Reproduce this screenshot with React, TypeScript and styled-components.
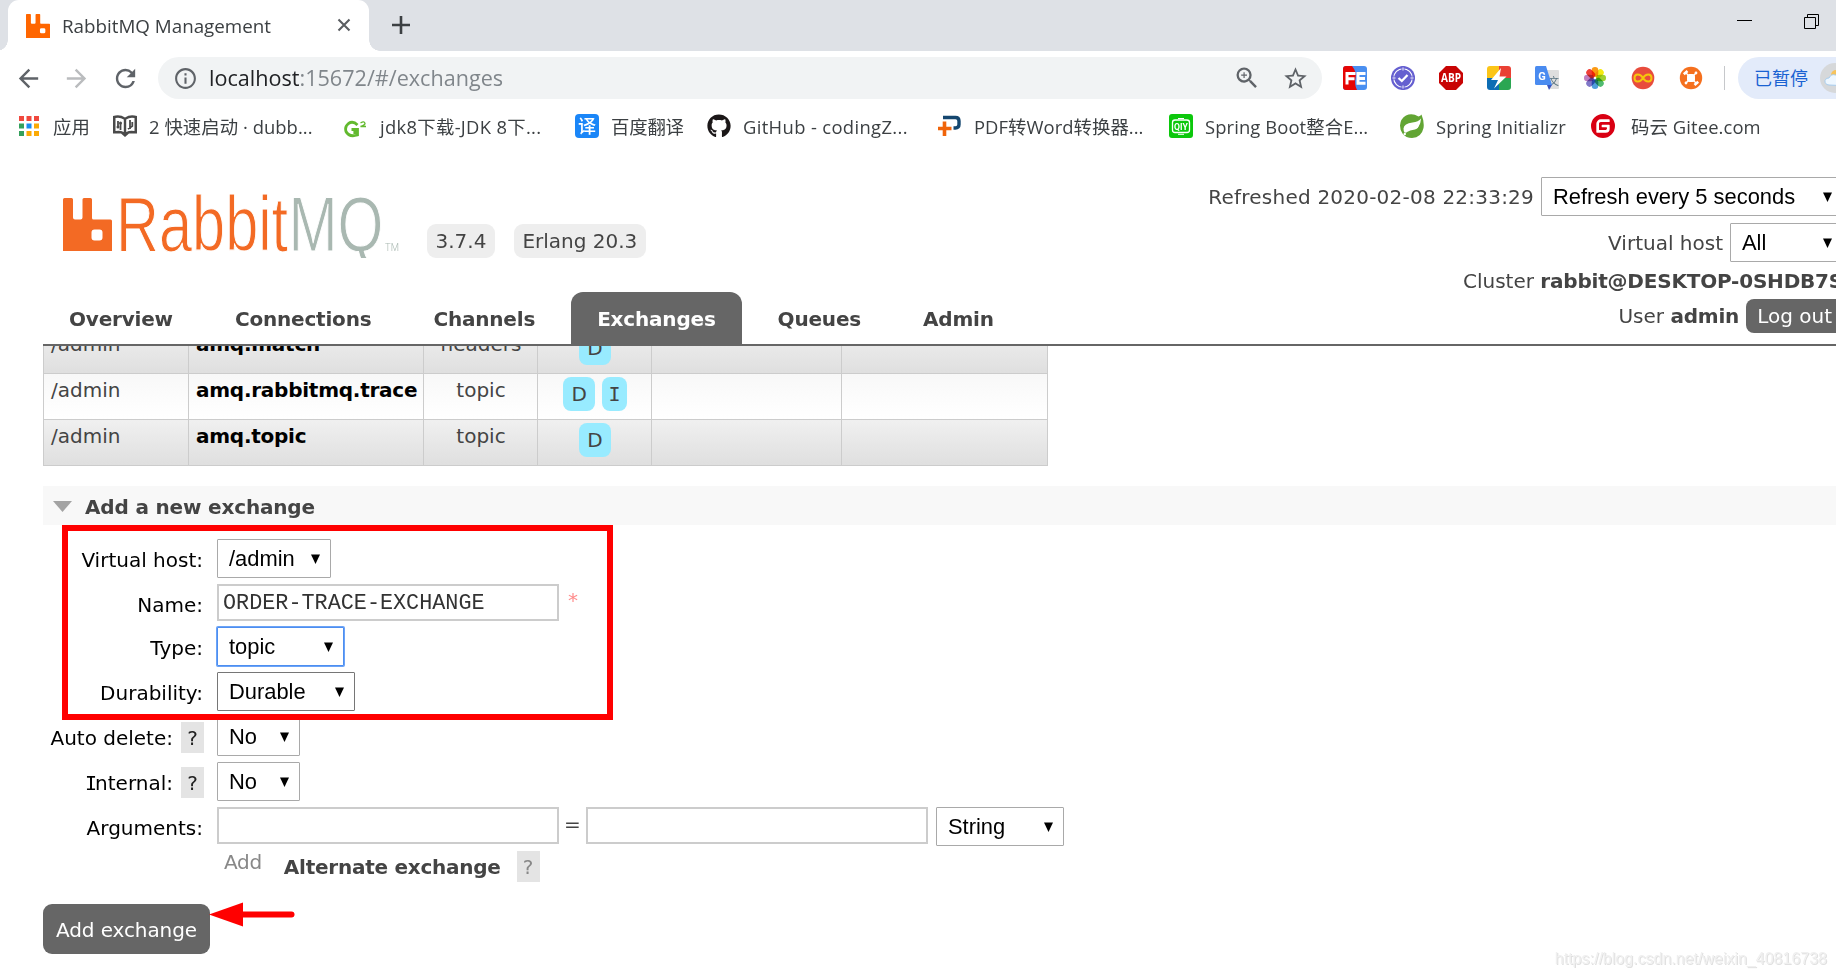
import React from "react";
import styled, { createGlobalStyle, css } from "styled-components";
import { MdArrowBack, MdArrowForward, MdRefresh, MdInfoOutline, MdZoomIn, MdStarBorder } from "react-icons/md";
import { FaGithub } from "react-icons/fa";
import { SiGitee } from "react-icons/si";

const GlobalStyle = createGlobalStyle`
  * { box-sizing: border-box; }
  body { margin: 0; background: #fff; overflow: hidden; }
`;

const uiFont = `"Open Sans", "Noto Sans CJK SC", sans-serif`;
const pageFont = `"DejaVu Sans", Verdana, sans-serif`;

const Window = styled.div`
  position: relative;
  width: 1836px;
  height: 977px;
  overflow: hidden;
  display: flex;
  flex-direction: column;
  background: #fff;
  font-family: ${pageFont};
  font-size: 20px;
  color: #444;
  white-space: nowrap;
`;

/* ---------- browser chrome ---------- */

const TabStrip = styled.div`
  flex: none;
  display: flex;
  height: 51px;
  padding-left: 8px;
  background: #dee1e6;
`;

const BrowserTab = styled.div`
  position: relative;
  display: flex;
  align-items: center;
  width: 361px;
  padding: 0 18px;
  border-radius: 11px 11px 0 0;
  background: #fff;
  font-family: ${uiFont};
  font-size: 18.8px;
  color: #3c4043;
  &::before, &::after {
    content: "";
    position: absolute;
    bottom: 0;
    width: 11px;
    height: 11px;
  }
  &::before { left: -11px; background: radial-gradient(circle at 0 0, #dee1e6 10.5px, #fff 11px); }
  &::after { right: -11px; background: radial-gradient(circle at 100% 0, #dee1e6 10.5px, #fff 11px); }
`;

const TabTitle = styled.span`
  flex: 1;
  margin-left: 12px;
  line-height: 48px;
`;

const CloseGlyph = styled.svg`
  margin: 0 0 1px;
  width: 14px;
  height: 14px;
`;

const NewTab = styled.svg`
  margin: 16px 0 0 22px;
  width: 20px;
  height: 20px;
`;

const WindowControls = styled.div`
  display: flex;
  gap: 52px;
  margin-left: auto;
  padding: 13px 16px 0 0;
`;

const Toolbar = styled.div`
  flex: none;
  display: flex;
  align-items: center;
  height: 54px;
  padding-left: 14px;
  color: #5f6368;
`;

const NavIcon = styled.span<{ $gap: number; $dim?: boolean }>`
  flex: none;
  display: flex;
  width: 29px;
  margin-right: ${p => p.$gap}px;
  font-size: 29px;
  color: ${p => (p.$dim ? "#babcbe" : "#5f6368")};
`;

const Omnibox = styled.div`
  flex: none;
  display: flex;
  align-items: center;
  width: 1164px;
  height: 42px;
  padding: 0 13px 0 15px;
  border-radius: 21px;
  background: #f1f3f4;
`;

const Url = styled.span`
  flex: 1;
  margin-left: 11px;
  font-family: ${uiFont};
  font-size: 21.6px;
  line-height: 42px;
  color: #80868b;
  b { font-weight: 400; color: #202124; }
`;

const StarIcon = styled(MdStarBorder)`
  margin-left: 21px;
`;

const Extensions = styled.div`
  flex: none;
  display: flex;
  gap: 24px;
  padding: 0 21px;
  svg { display: block; width: 24px; height: 24px; }
`;

const Divider = styled.span`
  flex: none;
  width: 1px;
  height: 24px;
  background: #c6c8cb;
`;

const ProfilePill = styled.div`
  flex: none;
  display: flex;
  align-items: center;
  width: 140px;
  height: 42px;
  margin-left: 13px;
  padding-left: 16px;
  border-radius: 21px;
  background: #e3ebfa;
  font-family: ${uiFont};
  font-size: 18px;
  line-height: 42px;
  color: #1a62d2;
  svg { margin-left: 12px; }
`;

const BookmarkBar = styled.div`
  flex: none;
  display: flex;
  align-items: center;
  height: 42px;
  padding-left: 19px;
`;

const Bookmark = styled.div<{ $width: number; $gap?: number; $spacing?: number }>`
  flex: none;
  display: flex;
  align-items: center;
  gap: ${p => p.$gap ?? 12}px;
  width: ${p => p.$width}px;
  font-family: ${uiFont};
  font-size: 18.4px;
  letter-spacing: ${p => p.$spacing ?? 0.1}px;
  line-height: 42px;
  color: #3c4043;
  svg { flex: none; display: block; }
  span { padding-top: 2px; line-height: 40px; }
`;

/* ---------- management page ---------- */

const PageHeader = styled.header`
  flex: none;
  display: flex;
  justify-content: space-between;
  width: 1800px;
  height: 199px;
  margin-left: 43px;
  border-bottom: 2px solid #666;
`;

const Brand = styled.div`
  display: flex;
  flex-direction: column;
  justify-content: space-between;
`;

const LogoRow = styled.div`
  display: flex;
  align-items: flex-end;
  height: 111px;
  padding-left: 20px;
`;

const Version = styled.span<{ $gap: number }>`
  height: 34px;
  margin-left: ${p => p.$gap}px;
  padding: 0 8.5px;
  border-radius: 9px;
  background: #eee;
  line-height: 35px;
`;

const Tabs = styled.nav`
  display: flex;
  gap: 10px;
`;

const Tab = styled.span<{ $active?: boolean }>`
  height: 52px;
  padding: 0 26px;
  border-radius: 12px 12px 0 0;
  font-weight: 700;
  letter-spacing: -0.19px;
  line-height: 54px;
  ${p => p.$active && css`background: #666; color: #fff;`}
`;

const Status = styled.div`
  display: flex;
  flex-direction: column;
  align-items: flex-end;
  padding-top: 30px;
`;

const StatusRow = styled.div<{ $height: number }>`
  flex: none;
  display: flex;
  align-items: center;
  gap: 7px;
  height: ${p => p.$height}px;
  b { letter-spacing: -0.2px; }
`;

const Timestamp = styled.span`
  letter-spacing: 0.22px;
`;

const LogOut = styled.span`
  height: 34px;
  padding: 0 11px;
  border-radius: 8px;
  background: #666;
  color: #fff;
  line-height: 35px;
`;

const SelectBox = styled.span<{ $width: number; $tone?: "dark" | "focus" }>`
  flex: none;
  display: flex;
  align-items: center;
  justify-content: space-between;
  width: ${p => p.$width}px;
  height: 39px;
  padding: 0 10px 0 11px;
  border: 1px solid ${p => (p.$tone === "focus" ? "#4d8ef0" : p.$tone === "dark" ? "#767676" : "#a9a9a9")};
  border-radius: 1px;
  ${p => p.$tone === "focus" && css`box-shadow: 0 0 0 1px #6ba3f7;`}
  background: #fff;
  font-family: "Liberation Sans", Arial, sans-serif;
  font-size: 21.9px;
  line-height: 37px;
  color: #000;
`;

const Main = styled.main`
  flex: 1;
  min-height: 0;
  overflow: hidden;
  padding-left: 43px;
`;

const Table = styled.div`
  width: 1005px;
  margin-top: -18px;
  border-left: 1px solid #ccc;
`;

const Row = styled.div<{ $alt?: boolean }>`
  display: grid;
  grid-template-columns: 145px 235px 114px 114px 190px 206px;
  height: 46px;
  border-bottom: 1px solid #ccc;
  background: ${p => (p.$alt ? "linear-gradient(#f0f0f0, #dfdfdf)" : "linear-gradient(#f8f8f8, #fff)")};
`;

const Cell = styled.div<{ $center?: boolean }>`
  display: flex;
  justify-content: ${p => (p.$center ? "center" : "flex-start")};
  gap: 7px;
  padding: 3px 6px 3px 7px;
  border-right: 1px solid #ccc;
  line-height: 27px;
`;

const ExchangeName = styled.b`
  letter-spacing: -0.25px;
  color: #000;
`;

/* capital I with serifs */
const SerifI = styled.span`
  margin: 0 -2px;
  font-family: "DejaVu Sans Mono", monospace;
`;

const Feature = styled.span`
  height: 34px;
  padding: 0 8.3px;
  border-radius: 8px;
  background: #98ebff;
  line-height: 35px;
`;

const SectionTitle = styled.h2`
  display: flex;
  align-items: center;
  gap: 13px;
  height: 39px;
  margin: 20px 0 0;
  padding: 2px 0 0 10px;
  background: #f8f8f8;
  font-size: 20px;
  font-weight: 700;
  letter-spacing: -0.17px;
`;

const Form = styled.div`
  padding-top: 14px;
`;

const FormRow = styled.div<{ $height?: number }>`
  display: flex;
  height: ${p => p.$height ?? 45}px;
`;

const Label = styled.label<{ $help?: boolean }>`
  display: flex;
  justify-content: flex-end;
  width: 161px;
  margin-right: 13px;
  padding-right: ${p => (p.$help ? 0 : 1)}px;
  line-height: 42px;
  color: #000;
`;

const Help = styled.span<{ $muted?: boolean }>`
  width: 23px;
  height: 31px;
  margin-top: ${p => (p.$muted ? -1 : 5)}px;
  margin-left: ${p => (p.$muted ? 0 : 8)}px;
  background: #e4e4e4;
  text-align: center;
  line-height: 32px;
  color: ${p => (p.$muted ? "#888" : "#222")};
`;

const TextInput = styled.span`
  flex: none;
  width: 342px;
  height: 37px;
  padding-left: 4px;
  border: 2px solid #ccc;
  background: #fff;
  font-family: "Liberation Mono", "Courier New", monospace;
  font-size: 21.8px;
  line-height: 35px;
  color: #333;
`;

const Required = styled.span`
  margin-left: 9px;
  line-height: 33px;
  color: #ff8c8c;
`;

const Equals = styled.span`
  width: 27px;
  text-align: center;
  line-height: 35px;
`;

const StringSelect = styled(SelectBox)`
  margin-left: 8px;
`;

const Hints = styled.div`
  display: flex;
  height: 52px;
  padding-left: 181px;
  color: #888;
`;

const AddHint = styled.span`
  line-height: 20px;
  letter-spacing: -0.3px;
`;

const AltExchange = styled.b`
  margin: 0 16px 0 22px;
  line-height: 30px;
  letter-spacing: -0.25px;
  color: #444;
`;

const SubmitButton = styled.button`
  display: block;
  width: 167px;
  height: 50px;
  padding: 2px 0 0;
  border: 0;
  border-radius: 9px;
  background: #666;
  font: 20px ${pageFont};
  letter-spacing: -0.1px;
  color: #fff;
`;

const Highlight = styled.div`
  position: absolute;
  left: 62px;
  top: 525px;
  width: 551px;
  height: 195px;
  border: 6px solid #f00;
`;

const Pointer = styled.svg`
  position: absolute;
  left: 208px;
  top: 901px;
`;

const Watermark = styled.div`
  position: absolute;
  right: 9px;
  bottom: 9px;
  font: 16px "Liberation Sans", Arial, sans-serif;
  color: #f0f0f0;
  text-shadow: 1px 1px 0 #e0e0e0;
`;

/* ---------- drawings ---------- */

const Rabbit = ({ w, h, color }: { w: number; h: number; color: string }) => (
  <svg width={w} height={h} viewBox="0 0 49 53" preserveAspectRatio="none">
    <path
      fill={color}
      fillRule="evenodd"
      d="M1.5 0H8.5Q10 0 10 1.5V19.5Q10 21.5 12 21.5H17.5Q19.5 21.5 19.5 19.5V1.5Q19.5 0 21 0H27.5Q29 0 29 1.5V20Q29 21.5 30.5 21.5H47.5Q49 21.5 49 23V53H0V1.5Q0 0 1.5 0ZM31.5 31.5Q28.5 31.5 28.5 34.5V39.5Q28.5 42.5 31.5 42.5H36.5Q39.5 42.5 39.5 39.5V34.5Q39.5 31.5 36.5 31.5Z"
    />
  </svg>
);

const Logo = () => (
  <svg width="337" height="111" viewBox="63 147 337 111">
    <svg x="63" y="198" width="49" height="53"><Rabbit w={49} h={53} color="#f36a24" /></svg>
    <g fontFamily="Liberation Sans, Arial, sans-serif" fontSize="77" stroke="#fff" strokeWidth="1.1">
      <text x="116" y="251" fill="#f36a24" textLength="172" lengthAdjust="spacingAndGlyphs">Rabbit</text>
      <text x="288.5" y="251" fill="#a9b8b1" textLength="95" lengthAdjust="spacingAndGlyphs">MQ</text>
    </g>
    <text x="385" y="250.5" fontFamily="Roboto, sans-serif" fontWeight="300" fontSize="11" fill="#a9b8b1" textLength="14" lengthAdjust="spacingAndGlyphs">TM</text>
  </svg>
);

const Caret = () => (
  <svg width="9" height="10" viewBox="0 0 9 10"><path d="M0 .5H9L4.5 10Z" fill="#000" /></svg>
);

const Select = ({ width, children, tone }: { width: number; children: string; tone?: "dark" | "focus" }) => (
  <SelectBox $width={width} $tone={tone}>{children}<Caret /></SelectBox>
);

const AppsIcon = () => (
  <svg width="20" height="20" viewBox="0 0 20 20">
    {["#f0483e", "#f0483e", "#f0483e", "#34a05c", "#1a8cf0", "#fbaa05", "#34a05c", "#fbaa05", "#fbaa05"].map((c, i) => (
      <rect key={i} x={(i % 3) * 7.5} y={Math.floor(i / 3) * 7.5} width="5" height="5" fill={c} />
    ))}
  </svg>
);

const BookIcon = () => (
  <svg width="24" height="22" viewBox="0 0 24 22">
    <path d="M0 1Q7-1 12 2.5Q17-1 24 1V18.5H16L12 22L8 18.5H0Z" fill="#4a4a4a" />
    <path d="M2.5 3Q7 2 10.8 4.5V17Q7 15 2.5 16ZM21.5 3Q17 2 13.2 4.5V17Q17 15 21.5 16Z" fill="#fff" />
    <path d="M5 6V12M7.5 8V15M17 5V14M19.3 7V11L15 14" stroke="#4a4a4a" strokeWidth="1.8" fill="none" />
    <circle cx="5" cy="12" r="1.5" fill="#4a4a4a" /><circle cx="7.5" cy="8" r="1.5" fill="#4a4a4a" />
  </svg>
);

const GIcon = () => (
  <svg width="24" height="24" viewBox="0 0 24 24" fill="none" stroke="#62b92e">
    <path d="M14.5 11Q10 6.500 5.5 9.5Q1.5 12.500 3 17.5Q6 23.500 14.5 21V15.500H8.5M11.8 15.500V20" strokeWidth="2.8" />
    <path d="M17.500 9Q21.5 6.500 22 9.5Q22 11 17.5 12.500H23" strokeWidth="1.4" />
  </svg>
);

const TranslateIcon = () => (
  <svg width="24" height="24" viewBox="0 0 24 24">
    <rect width="24" height="24" rx="4" fill="#1a86f8" />
    <text x="12" y="18.5" fontSize="18" fontFamily="Noto Sans CJK SC" fontWeight="500" fill="#fff" textAnchor="middle">译</text>
  </svg>
);

const PdfIcon = () => (
  <svg width="24" height="22" viewBox="0 0 24 22" fill="none">
    <path d="M5 2.5H17.5Q21 2.5 21 6V9.5Q21 13 17.5 13H15.5" stroke="#15476f" strokeWidth="3.4" />
    <path d="M0 13.5H13.5M6.5 6.5V21" stroke="#f0640a" strokeWidth="3.6" />
  </svg>
);

const QiyIcon = () => (
  <svg width="24" height="24" viewBox="0 0 24 24">
    <rect width="24" height="24" rx="3" fill="#0cc80c" />
    <rect x="3.5" y="6" width="17" height="12.5" rx="2.5" fill="none" stroke="#fff" strokeWidth="1.3" />
    <path d="M9 4.5H15M9 20.3H15" stroke="#fff" />
    <text x="12" y="15.8" fontSize="9.5" fontWeight="700" fontFamily="Roboto" fill="#fff" textAnchor="middle" textLength="14" lengthAdjust="spacingAndGlyphs">QIY</text>
  </svg>
);

const LeafIcon = () => (
  <svg width="24" height="24" viewBox="0 0 24 24">
    <path d="M21.5 .5Q24.5 8 23.5 14Q21.5 23.5 12 24Q6 24 2.5 19.5Q0 16 0 11.5Q.5 4.5 6 1.5Q12-1.5 18.5 2.5Q20.5 2 21.5 .5Z" fill="#62a534" />
    <path d="M21 4.5Q18.5 8 12.5 8.5Q4 9.5 3.5 14.5Q3.5 17 4.5 18.5Q14 20 18 14Q21 9.5 21 4.5Z" fill="#fff" />
    <path d="M20.500 8Q20 14 15 15.500Q10 16 6 18.500Q11 21 15 18.500Q20.500 15.500 20.500 8Z" fill="#62a534" />
    <circle cx="4.8" cy="20" r="1.2" fill="#fff" />
  </svg>
);

const FeIcon = () => (
  <svg viewBox="0 0 24 24">
    <rect width="24" height="24" rx="3" fill="#4a8ff0" />
    <path d="M3 0H9Q14 6 12.5 12Q11 18 14 24H3Q0 24 0 21V3Q0 0 3 0Z" fill="#e60505" />
    <path d="M4 18.5V7.5H12.5M4 12.8H11.5M22.5 7.5H15V17.3H22.5M15 12.5H22" stroke="#fff" strokeWidth="3" fill="none" />
  </svg>
);

const CheckIcon = () => (
  <svg viewBox="0 0 24 24">
    <circle cx="12" cy="12" r="12" fill="#655fd0" />
    <circle cx="12" cy="12" r="9.3" fill="none" stroke="#fff" strokeWidth="1.1" />
    <path d="M12 0V4M12 20V24M0 12H4M20 12H24" stroke="#655fd0" strokeWidth="3" />
    <path d="M12 1.5V4.5M12 19.5V22.5M1.5 12H4.5M19.5 12H22.5" stroke="#fff" strokeWidth="1" />
    <path d="M7.5 12L10.8 15L16.5 9" fill="none" stroke="#fff" strokeWidth="2.3" />
  </svg>
);

const AbpIcon = () => (
  <svg viewBox="0 0 24 24">
    <path d="M7 0H17L24 7V17L17 24H7L0 17V7Z" fill="#c80404" />
    <text x="12" y="16.3" fontSize="11.5" fontWeight="700" fontFamily="Open Sans" fill="#fff" textAnchor="middle" textLength="20" lengthAdjust="spacingAndGlyphs">ABP</text>
  </svg>
);

const BoltIcon = () => (
  <svg viewBox="0 0 24 24">
    <path d="M3 0H12V12H0V3Q0 0 3 0Z" fill="#fbc518" />
    <path d="M12 0H21Q24 0 24 3V12H12Z" fill="#ea4034" />
    <path d="M0 12H12V24H3Q0 24 0 21Z" fill="#0d6db4" />
    <path d="M12 12H24V21Q24 24 21 24H12Z" fill="#2ba652" />
    <path d="M14 2L4 14H11L7 22.5L19.5 10.5H12.5Z" fill="#fff" />
  </svg>
);

const GTranslateIcon = () => (
  <svg viewBox="0 0 24 24">
    <path d="M10 4H23Q24 4 24 5V22Q24 23 23 23H15Z" fill="#dedede" />
    <text x="18.8" y="18.5" fontSize="10.5" fontFamily="Noto Sans CJK SC" fill="#55717f" textAnchor="middle">文</text>
    <path d="M12 19H17L14 24Z" fill="#3a55c0" />
    <path d="M1.5 0H11L17 19H1.5Q0 19 0 17.5V1.5Q0 0 1.5 0Z" fill="#4a8bf0" />
    <text x="7" y="13.5" fontSize="11" fontWeight="700" fontFamily="Roboto" fill="#fff" textAnchor="middle">G</text>
  </svg>
);

const Petal = styled.rect`
  mix-blend-mode: multiply;
`;

const petals = ["#fb9a14", "#f5ea10", "#a0d030", "#50bb70", "#4f9fdc", "#8078c8", "#c07fc0", "#f04038"];
const FlowerIcon = () => (
  <svg viewBox="0 0 24 24">
    {petals.map((c, i) => (
      <Petal key={i} x="8.700" y="1" width="6.600" height="9.800" rx="3.300" fill={c} transform={`rotate(${i * 45} 12 12)`} />
    ))}
  </svg>
);

const InfinityIcon = () => (
  <svg viewBox="0 0 24 24">
    <circle cx="12" cy="12" r="11.3" fill="#e84c3d" />
    <path d="M12 12C9 7 3.5 7.5 3.5 12S9 17 12 12S20.5 7.500 20.5 12S15 17 12 12Z" fill="none" stroke="#f5c50c" strokeWidth="2" />
  </svg>
);

const TurtleIcon = () => (
  <svg viewBox="0 0 24 24">
    <circle cx="12" cy="12" r="11.2" fill="#f5701e" />
    <rect x="8" y="8" width="8" height="8" rx="2.5" fill="#fff" />
    <path d="M6.5 6.5L9.5 9.5M17.5 17.5L14.5 14.5M16.500 7.500L14.5 9.5M7.500 16.500L9.5 14.5" stroke="#fff" strokeWidth="1.4" />
    <path d="M4.8 8.3L8.5 5M19.2 15.7L15.5 19" stroke="#fff" strokeWidth="2.6" />
    <circle cx="17" cy="7" r="1.4" fill="#fff" /><circle cx="7" cy="17" r="1.4" fill="#fff" />
  </svg>
);

const CloudAvatar = () => (
  <svg width="30" height="30" viewBox="0 0 30 30">
    <circle cx="15" cy="15" r="15" fill="#d6d8da" />
    <circle cx="16" cy="12" r="5" fill="#f6c35c" />
    <path d="M9 22Q4.5 21.5 5 17.5Q6 14.5 9 15Q11 10.5 15.5 12Q18.5 13 19 16Q24 16 24 20Q23 22.5 20 22.5Z" fill="#eef7ff" stroke="#a8cdee" />
  </svg>
);

const exchanges = [
  { name: "amq.match", type: "headers", features: ["D"] },
  { name: "amq.rabbitmq.trace", type: "topic", features: ["D", "I"] },
  { name: "amq.topic", type: "topic", features: ["D"] },
];

const pages = ["Overview", "Connections", "Channels", "Exchanges", "Queues", "Admin"];

export default function App() {
  return (
    <Window>
      <GlobalStyle />
      <TabStrip>
        <BrowserTab>
          <Rabbit w={24} h={24} color="#ff6600" />
          <TabTitle>RabbitMQ Management</TabTitle>
          <CloseGlyph viewBox="0 0 14 14"><path d="M1.5 1.5L12.5 12.5M12.5 1.5L1.5 12.5" stroke="#5a5d61" strokeWidth="2.1" /></CloseGlyph>
        </BrowserTab>
        <NewTab viewBox="0 0 20 20"><path d="M10 0V18M1 9H19" stroke="#3c4043" strokeWidth="2.6" /></NewTab>
        <WindowControls>
          <svg width="16" height="16" viewBox="0 0 16 16"><path d="M1 7.5H16" stroke="#000" /></svg>
          <svg width="16" height="17" viewBox="0 0 16 17" fill="none" stroke="#000"><path d="M.5 4.5H11.5V15.5H.5ZM3.5 4.5V1.5H14.5V12.5H11.5" /></svg>
        </WindowControls>
      </TabStrip>

      <Toolbar>
        <NavIcon $gap={19}><MdArrowBack /></NavIcon>
        <NavIcon $gap={20} $dim><MdArrowForward /></NavIcon>
        <NavIcon $gap={18}><MdRefresh /></NavIcon>
        <Omnibox>
          <MdInfoOutline size={25} />
          <Url><b>localhost</b>:15672/#/exchanges</Url>
          <MdZoomIn size={28} />
          <StarIcon size={27} />
        </Omnibox>
        <Extensions>
          <FeIcon /><CheckIcon /><AbpIcon /><BoltIcon /><GTranslateIcon /><FlowerIcon /><InfinityIcon /><TurtleIcon />
        </Extensions>
        <Divider />
        <ProfilePill>已暂停<CloudAvatar /></ProfilePill>
      </Toolbar>

      <BookmarkBar>
        <Bookmark $width={94} $gap={14}><AppsIcon /><span>应用</span></Bookmark>
        <Bookmark $width={230} $spacing={0.05}><BookIcon /><span>2 快速启动 · dubb...</span></Bookmark>
        <Bookmark $width={232} $gap={13} $spacing={0.3}><GIcon /><span>jdk8下载-JDK 8下...</span></Bookmark>
        <Bookmark $width={132} $gap={12} $spacing={-0.2}><TranslateIcon /><span>百度翻译</span></Bookmark>
        <Bookmark $width={231} $spacing={0.35}><FaGithub size={24} color="#1b1718" /><span>GitHub - codingZ...</span></Bookmark>
        <Bookmark $width={231} $spacing={0.05}><PdfIcon /><span>PDF转Word转换器...</span></Bookmark>
        <Bookmark $width={231}><QiyIcon /><span>Spring Boot整合E...</span></Bookmark>
        <Bookmark $width={191} $spacing={0.15}><LeafIcon /><span>Spring Initializr</span></Bookmark>
        <Bookmark $width={200} $gap={16}><SiGitee size={24} color="#d90013" /><span>码云 Gitee.com</span></Bookmark>
      </BookmarkBar>

      <PageHeader>
        <Brand>
          <LogoRow>
            <Logo />
            <Version $gap={27}>3.7.4</Version>
            <Version $gap={19}>Erlang 20.3</Version>
          </LogoRow>
          <Tabs>
            {pages.map(p => <Tab key={p} $active={p === "Exchanges"}>{p}</Tab>)}
          </Tabs>
        </Brand>
        <Status>
          <StatusRow $height={39}><Timestamp>Refreshed 2020-02-08 22:33:29</Timestamp><Select width={302}>Refresh every 5 seconds</Select></StatusRow>
          <StatusRow $height={53}>Virtual host<Select width={113}>All</Select></StatusRow>
          <StatusRow $height={24}><span>Cluster <b>rabbit@DESKTOP-0SHDB7S</b></span></StatusRow>
          <StatusRow $height={46}><span>User <b>admin</b></span><LogOut>Log out</LogOut></StatusRow>
        </Status>
      </PageHeader>

      <Main>
        <Table>
          {exchanges.map((e, i) => (
            <Row key={e.name} $alt={i % 2 === 0}>
              <Cell>/admin</Cell>
              <Cell><ExchangeName>{e.name}</ExchangeName></Cell>
              <Cell $center>{e.type}</Cell>
              <Cell $center>{e.features.map(f => <Feature key={f}>{f === "I" ? <SerifI>I</SerifI> : f}</Feature>)}</Cell>
              <Cell />
              <Cell />
            </Row>
          ))}
        </Table>

        <SectionTitle>
          <svg width="19" height="11" viewBox="0 0 19 11"><path d="M0 0H19L9.5 11Z" fill="#a3a3a3" /></svg>
          Add a new exchange
        </SectionTitle>

        <Form>
          <FormRow>
            <Label>Virtual host:</Label>
            <Select width={114}>/admin</Select>
          </FormRow>
          <FormRow $height={43}>
            <Label>Name:</Label>
            <TextInput>ORDER-TRACE-EXCHANGE</TextInput>
            <Required>*</Required>
          </FormRow>
          <FormRow>
            <Label>Type:</Label>
            <Select width={127} tone="focus">topic</Select>
          </FormRow>
          <FormRow>
            <Label>Durability:</Label>
            <Select width={138} tone="dark">Durable</Select>
          </FormRow>
          <FormRow>
            <Label $help>Auto delete:<Help>?</Help></Label>
            <Select width={83}>No</Select>
          </FormRow>
          <FormRow>
            <Label $help><SerifI>I</SerifI>nternal:<Help>?</Help></Label>
            <Select width={83}>No</Select>
          </FormRow>
          <FormRow>
            <Label>Arguments:</Label>
            <TextInput />
            <Equals>=</Equals>
            <TextInput />
            <StringSelect $width={128}>String<Caret /></StringSelect>
          </FormRow>
          <Hints>
            <AddHint>Add</AddHint>
            <AltExchange>Alternate exchange</AltExchange>
            <Help $muted>?</Help>
          </Hints>
          <SubmitButton>Add exchange</SubmitButton>
        </Form>
      </Main>

      <Highlight />
      <Pointer width="88" height="28" viewBox="0 0 88 28">
        <path d="M1 13.5L35 1.5V25.5Z" fill="#f00" />
        <path d="M30 13.5H83.5" stroke="#f00" strokeWidth="6" strokeLinecap="round" />
      </Pointer>
      <Watermark>https://blog.csdn.net/weixin_40816738</Watermark>
    </Window>
  );
}
